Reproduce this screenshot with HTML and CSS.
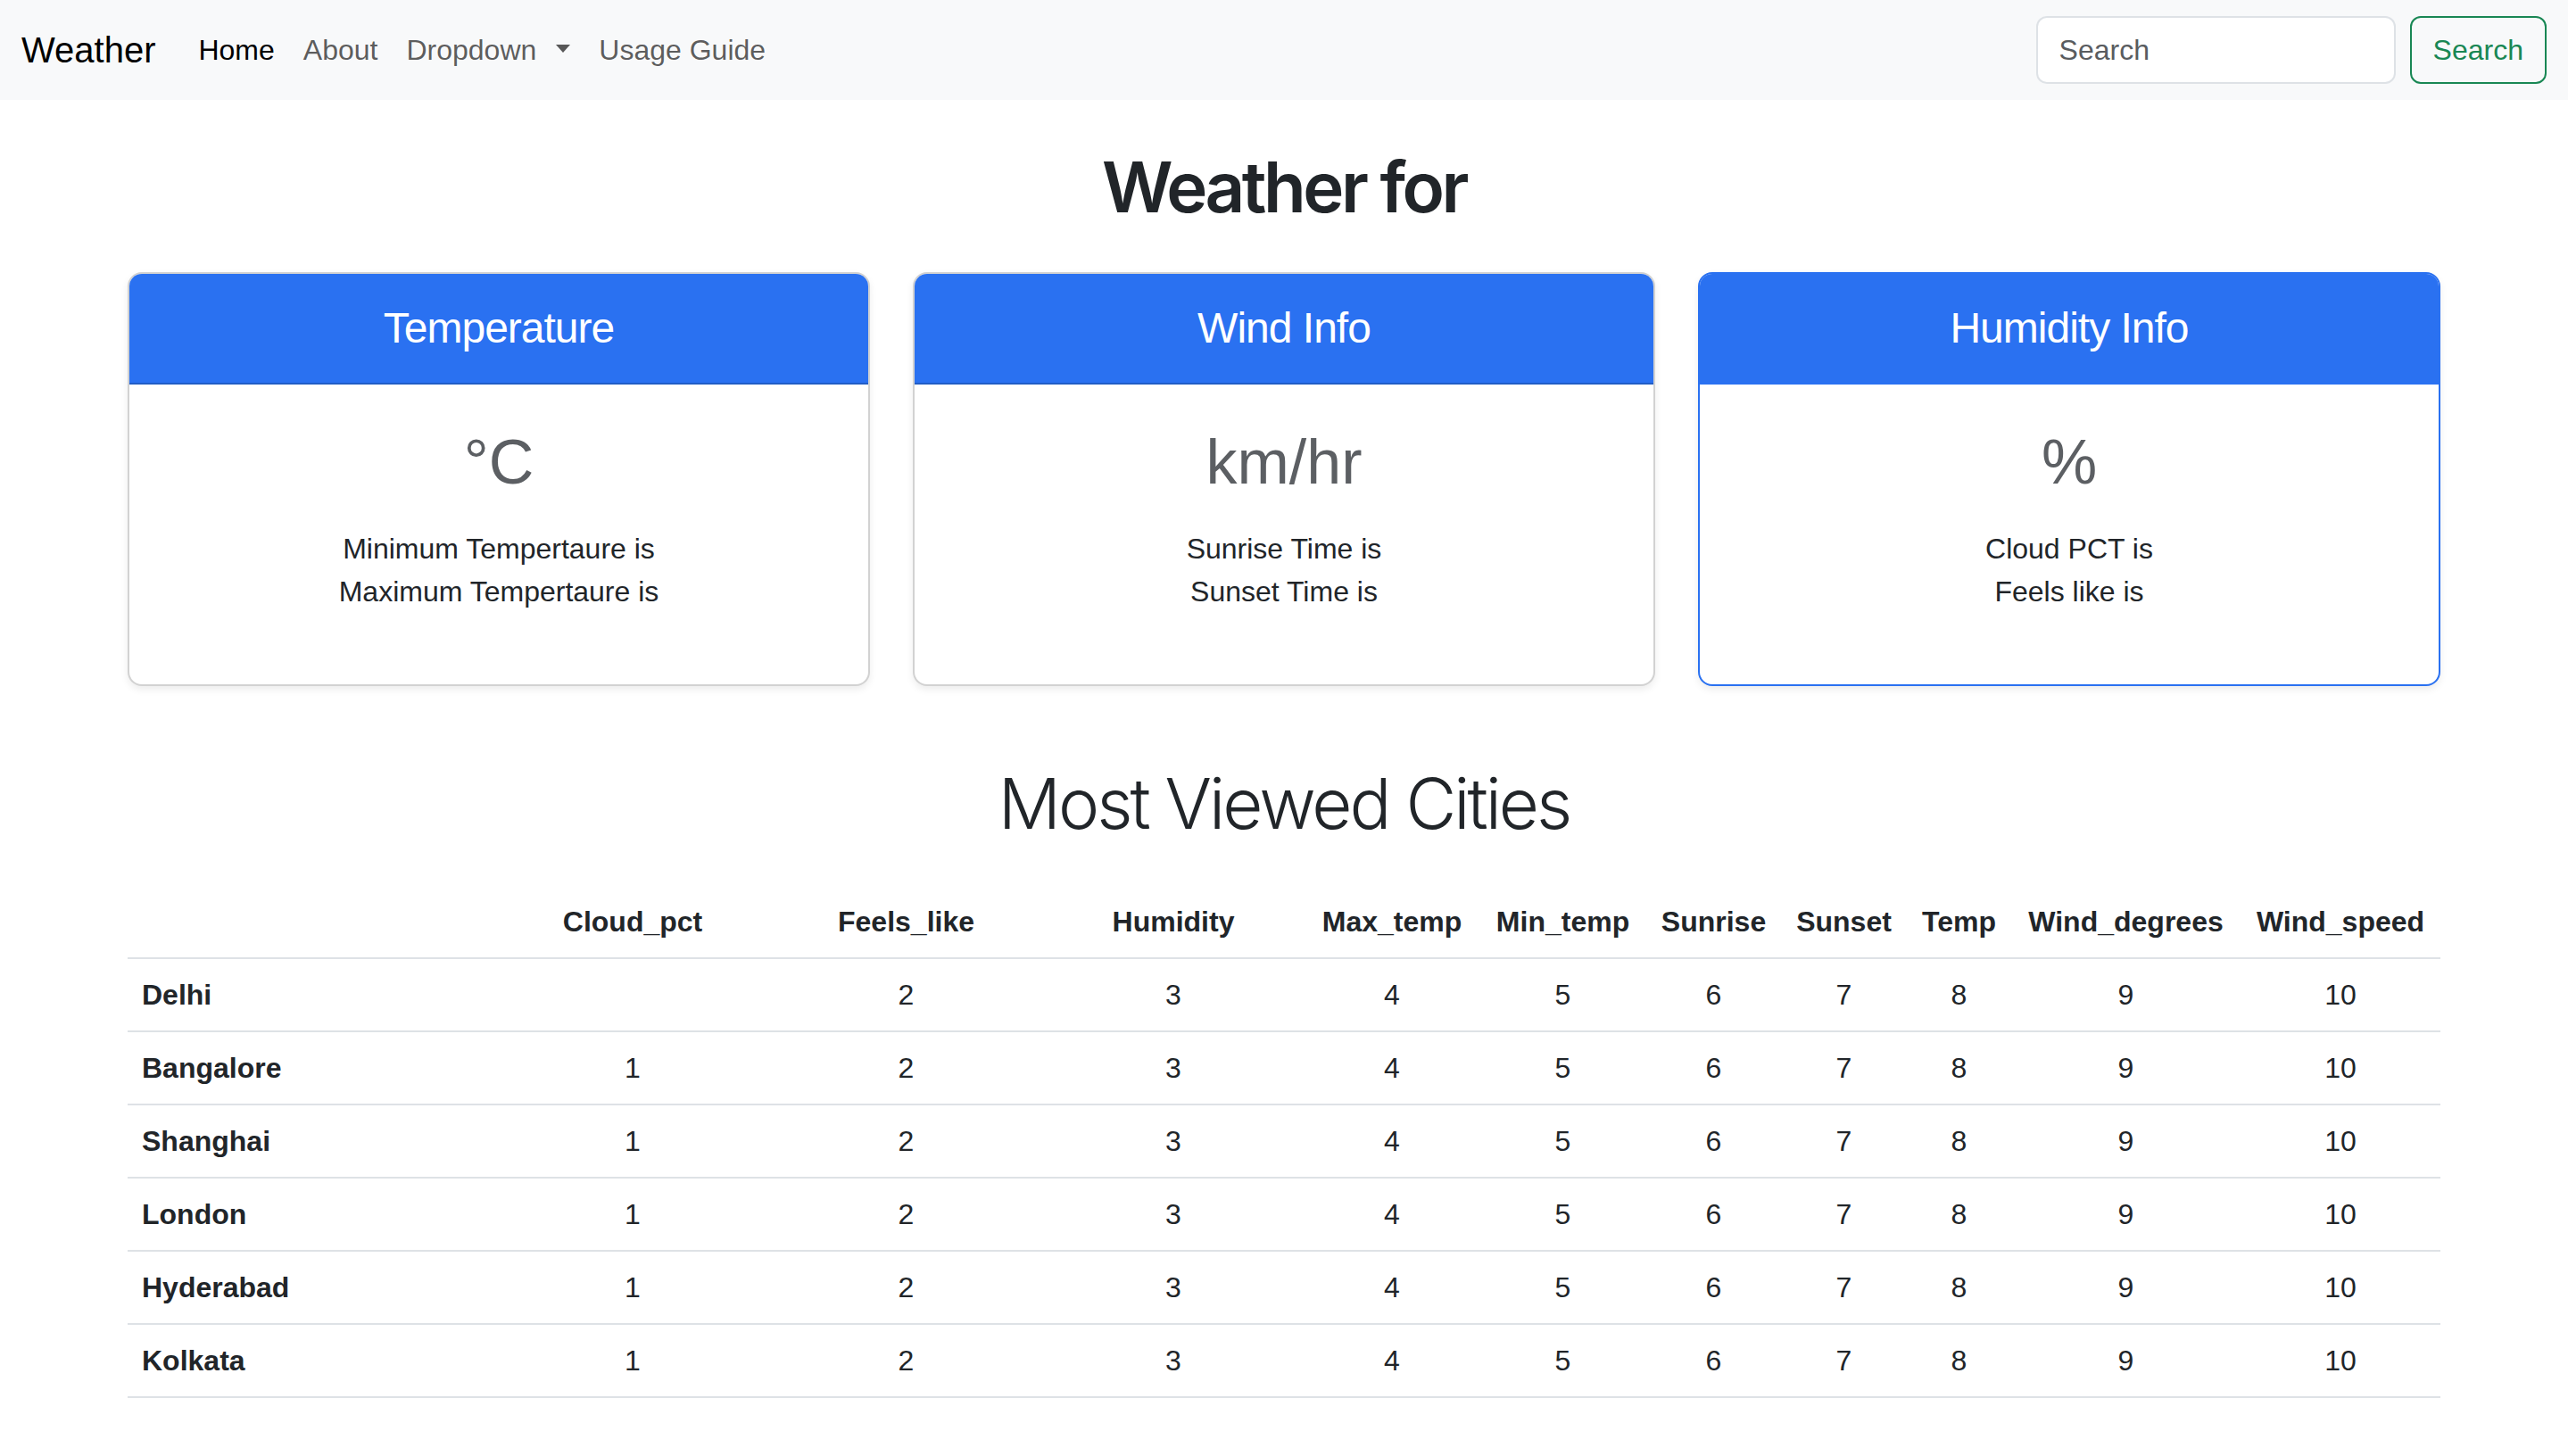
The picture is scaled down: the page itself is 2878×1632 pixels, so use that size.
FILE: index.html
```html
<!DOCTYPE html>
<html lang="en">
<head>
<meta charset="utf-8">
<title>Weather</title>
<link rel="stylesheet" href="styles.css">
</head>
<body>
<nav class="navbar">
  <div class="navbar-inner">
    <a class="brand" href="#">Weather</a>
    <ul class="nav">
      <li><a class="nav-link active" href="#">Home</a></li>
      <li><a class="nav-link" href="#">About</a></li>
      <li><a class="nav-link dropdown-toggle" href="#">Dropdown</a></li>
      <li><a class="nav-link" href="#">Usage Guide</a></li>
    </ul>
    <form class="search-form">
      <input class="search-input" type="search" placeholder="Search">
      <button class="btn-search" type="button">Search</button>
    </form>
  </div>
</nav>
<main class="container">
  <h1 class="page-title">Weather for</h1>
  <div class="cards">
    <div class="card">
      <div class="card-header"><h4 class="card-heading">Temperature</h4></div>
      <div class="card-body">
        <h1 class="unit"><small class="unit-label">°C</small></h1>
        <ul class="info">
          <li>Minimum Tempertaure is</li>
          <li>Maximum Tempertaure is</li>
        </ul>
      </div>
    </div>
    <div class="card">
      <div class="card-header"><h4 class="card-heading">Wind Info</h4></div>
      <div class="card-body">
        <h1 class="unit"><small class="unit-label">km/hr</small></h1>
        <ul class="info">
          <li>Sunrise Time is</li>
          <li>Sunset Time is</li>
        </ul>
      </div>
    </div>
    <div class="card card-primary">
      <div class="card-header"><h4 class="card-heading">Humidity Info</h4></div>
      <div class="card-body">
        <h1 class="unit"><small class="unit-label">%</small></h1>
        <ul class="info">
          <li>Cloud PCT is</li>
          <li>Feels like is</li>
        </ul>
      </div>
    </div>
  </div>

  <h2 class="section-title">Most Viewed Cities</h2>
  <table class="cities">
    <colgroup>
      <col class="c-city"><col class="c-cloud"><col class="c-feels"><col class="c-hum">
      <col class="c-max"><col class="c-min"><col class="c-rise"><col class="c-set">
      <col class="c-temp"><col class="c-wdeg"><col class="c-wspd">
    </colgroup>
    <thead>
      <tr>
        <th></th><th>Cloud_pct</th><th>Feels_like</th><th>Humidity</th><th>Max_temp</th><th>Min_temp</th><th>Sunrise</th><th>Sunset</th><th>Temp</th><th>Wind_degrees</th><th>Wind_speed</th>
      </tr>
    </thead>
    <tbody>
      <tr><th class="city">Delhi</th><td></td><td>2</td><td>3</td><td>4</td><td>5</td><td>6</td><td>7</td><td>8</td><td>9</td><td>10</td></tr>
      <tr><th class="city">Bangalore</th><td>1</td><td>2</td><td>3</td><td>4</td><td>5</td><td>6</td><td>7</td><td>8</td><td>9</td><td>10</td></tr>
      <tr><th class="city">Shanghai</th><td>1</td><td>2</td><td>3</td><td>4</td><td>5</td><td>6</td><td>7</td><td>8</td><td>9</td><td>10</td></tr>
      <tr><th class="city">London</th><td>1</td><td>2</td><td>3</td><td>4</td><td>5</td><td>6</td><td>7</td><td>8</td><td>9</td><td>10</td></tr>
      <tr><th class="city">Hyderabad</th><td>1</td><td>2</td><td>3</td><td>4</td><td>5</td><td>6</td><td>7</td><td>8</td><td>9</td><td>10</td></tr>
      <tr><th class="city">Kolkata</th><td>1</td><td>2</td><td>3</td><td>4</td><td>5</td><td>6</td><td>7</td><td>8</td><td>9</td><td>10</td></tr>
    </tbody>
  </table>
</main>
</body>
</html>
```
FILE: styles.css
```css
* { box-sizing: border-box; }
html, body { margin: 0; padding: 0; }
body {
  font-family: "Liberation Sans", Arial, sans-serif;
  font-size: 32px;
  line-height: 1.5;
  color: #212529;
  background: #fff;
}

/* Navbar */
.navbar { background: #f8f9fa; padding: 16px 0; }
.navbar-inner { display: flex; align-items: center; padding: 0 24px; }
.brand {
  font-size: 40px;
  line-height: 60px;
  padding: 10px 0;
  margin-right: 32px;
  color: #000;
  text-decoration: none;
}
.nav { display: flex; list-style: none; margin: 0; padding: 0; flex: 1; }
.nav-link {
  display: block;
  padding: 16px;
  color: rgba(0, 0, 0, 0.65);
  text-decoration: none;
  line-height: 48px;
}
.nav-link.active { color: #000; }
.dropdown-toggle::after {
  content: "";
  display: inline-block;
  margin-left: 22px;
  vertical-align: 8px;
  border-top: 9px solid;
  border-left: 8.5px solid transparent;
  border-right: 8.5px solid transparent;
  border-bottom: 0;
}
.search-form { display: flex; align-items: center; }
.search-input {
  width: 403px;
  height: 76px;
  margin-right: 16px;
  padding: 12px 24px;
  font-family: inherit;
  font-size: 32px;
  color: #212529;
  background: #fff;
  border: 2px solid #dee2e6;
  border-radius: 12px;
  outline: none;
}
.search-input::placeholder { color: #595c5f; }
.btn-search {
  height: 76px;
  padding: 12px 24px;
  font-family: inherit;
  font-size: 32px;
  line-height: 48px;
  color: #198754;
  background: transparent;
  border: 2px solid #198754;
  border-radius: 12px;
}

/* Main */
.container { width: 2640px; margin: 0 auto; padding: 0 24px; }
.page-title {
  text-align: center;
  font-family: Inter, "Liberation Sans", Arial, sans-serif;
  font-size: 78px;
  font-weight: 600;
  letter-spacing: -3.5px;
  line-height: 96px;
  margin: 50px 0 47px;
  color: #212529;
}

.cards { display: grid; grid-template-columns: repeat(3, 1fr); gap: 48px; }
.card {
  background: #fff;
  border: 2px solid rgba(0, 0, 0, 0.175);
  border-radius: 16px;
  box-shadow: 0 4px 8px rgba(0, 0, 0, 0.075);
}
.card-header {
  background: #2a71f1;
  color: #fff;
  padding: 32px;
  text-align: center;
  border-bottom: 2px solid rgba(0, 0, 0, 0.175);
  border-radius: 14px 14px 0 0;
}
.card-primary { border-color: #2a71f1; }
.card-primary .card-header { border-bottom-color: #2a71f1; }
.card-heading {
  margin: 0;
  font-size: 48px;
  font-weight: 400;
  line-height: 57.6px;
  letter-spacing: -1px;
}
.card-body { padding: 32px; text-align: center; }
.unit { margin: 0; height: 96px; font-size: 80px; line-height: 96px; font-weight: 500; }
.unit-label {
  font-size: 70px;
  font-weight: 300;
  line-height: 0;
  vertical-align: -4px;
  color: #5c5f63;
}
.info { list-style: none; margin: 32px 0 48px; padding: 0; }
.info li { line-height: 48px; }

.section-title {
  text-align: center;
  font-family: Inter, "Liberation Sans", Arial, sans-serif;
  font-size: 78px;
  font-weight: 300;
  letter-spacing: -3px;
  line-height: 96px;
  margin: 84px 0 44px;
  color: #212529;
}

.cities {
  width: 100%;
  table-layout: fixed;
  border-collapse: collapse;
  text-align: center;
  margin-bottom: 32px;
}
.cities th, .cities td {
  padding: 16px;
  line-height: 48px;
  border-bottom: 2px solid #dee2e6;
  white-space: nowrap;
}
.cities th { font-weight: 700; }
.cities th.city { text-align: left; }
.c-city { width: 412px; }
.c-cloud { width: 308px; }
.c-feels { width: 305px; }
.c-hum { width: 294px; }
.c-max { width: 196px; }
.c-min { width: 187px; }
.c-rise { width: 151px; }
.c-set { width: 141px; }
.c-temp { width: 117px; }
.c-wdeg { width: 257px; }
.c-wspd { width: 224px; }
```
